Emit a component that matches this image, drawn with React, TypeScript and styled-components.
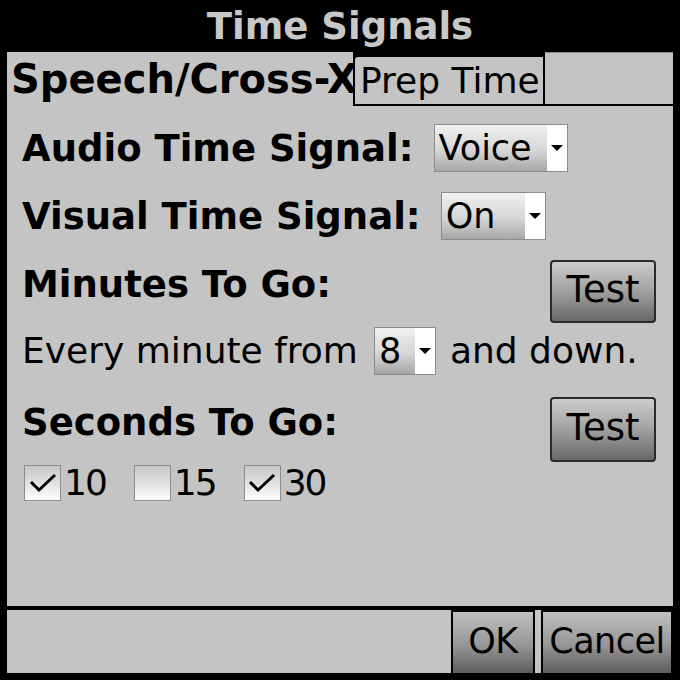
import React, { useState } from "react";
import styled, { createGlobalStyle } from "styled-components";

const GlobalStyle = createGlobalStyle`
  html, body {
    margin: 0;
    padding: 0;
    background: #000;
  }
  body {
    font-family: "DejaVu Sans", "Liberation Sans", sans-serif;
  }
`;

const Window = styled.div`
  width: 680px;
  height: 680px;
  box-sizing: border-box;
  background: #000;
  display: flex;
  flex-direction: column;
  padding: 0 7px 7px 7px;
`;

const TitleBar = styled.div`
  height: 52px;
  display: flex;
  align-items: center;
  justify-content: center;
  color: #c8c8c8;
  font-weight: bold;
  font-size: 37px;
  line-height: 1;
  padding-top: 1px;
  box-sizing: border-box;
`;

const TabRow = styled.div`
  height: 54px;
  display: flex;
`;

const Tab = styled.div<{ $active?: boolean; $w?: number }>`
  box-sizing: border-box;
  width: ${(p) => (p.$w ? `${p.$w}px` : "auto")};
  background: #c4c4c4;
  color: #000;
  display: flex;
  align-items: center;
  line-height: 1;
  font-size: ${(p) => (p.$active ? "40px" : "36px")};
  font-weight: ${(p) => (p.$active ? "bold" : "normal")};
  padding-left: ${(p) => (p.$active ? "4px" : "5px")};
  margin-top: ${(p) => (p.$active ? "0" : "3px")};
  border: ${(p) => (p.$active ? "none" : "2px solid #000")};
  border-top-left-radius: ${(p) => (p.$active ? "0" : "5px")};
  white-space: nowrap;
`;

const TabFiller = styled.div`
  flex: 1;
  background: #c4c4c4;
  border-top: 1px solid #8a8a8a;
  border-bottom: 2px solid #000;
`;

const Panel = styled.div`
  flex: 1;
  background: #c4c4c4;
  padding: 18px 17px 0 15px;
  display: flex;
  flex-direction: column;
`;

const Row = styled.div<{ $top: number; $h: number; $align?: string }>`
  display: flex;
  align-items: ${(p) => p.$align || "center"};
  height: ${(p) => p.$h}px;
  margin-top: ${(p) => p.$top}px;
`;

const Label = styled.span<{ $pad?: number; $gap?: number }>`
  font-weight: bold;
  font-size: 37px;
  line-height: 1;
  color: #000;
  padding-top: ${(p) => p.$pad || 0}px;
  margin-right: ${(p) => p.$gap || 0}px;
  white-space: nowrap;
`;

const Text = styled.span<{ $gap?: number; $lead?: number }>`
  font-size: 36px;
  line-height: 1;
  color: #000;
  margin-right: ${(p) => p.$gap || 0}px;
  margin-left: ${(p) => p.$lead || 0}px;
  white-space: nowrap;
`;

const Select = styled.div<{ $w: number }>`
  width: ${(p) => p.$w}px;
  height: 48px;
  box-sizing: border-box;
  border: 1px solid #8c8c8c;
  display: flex;
  flex-shrink: 0;
`;

const SelectValue = styled.div`
  flex: 1;
  background: linear-gradient(to bottom, #f0f0f0 0%, #d6d6d6 55%, #a6a6a6 100%);
  font-size: 35px;
  line-height: 1;
  display: flex;
  align-items: center;
  padding-left: 4px;
  color: #000;
`;

const SelectArrow = styled.div`
  width: 20px;
  background: #fff;
  display: flex;
  align-items: center;
  justify-content: center;
  &::after {
    content: "";
    border-left: 6px solid transparent;
    border-right: 6px solid transparent;
    border-top: 6px solid #000;
  }
`;

const PushButton = styled.button<{ $w: number; $h: number }>`
  width: ${(p) => p.$w}px;
  height: ${(p) => p.$h}px;
  margin-left: auto;
  box-sizing: border-box;
  border: 2px solid #2a2a2a;
  border-radius: 4px;
  background: linear-gradient(to bottom, #cdcdcd 0%, #a0a0a0 50%, #686868 100%);
  font-family: "DejaVu Sans", "Liberation Sans", sans-serif;
  font-size: 37px;
  line-height: 1;
  color: #000;
  padding: 0 0 4px 0;
  flex-shrink: 0;
`;

const CheckGroup = styled.div`
  display: flex;
  align-items: center;
  gap: 28px;
  padding-left: 2px;
`;

const CheckItem = styled.label`
  display: flex;
  align-items: center;
  gap: 3px;
  font-size: 36px;
  letter-spacing: -2px;
  line-height: 1;
  color: #000;
`;

const Box = styled.span`
  width: 37px;
  height: 36px;
  box-sizing: border-box;
  border: 1px solid #8e8e8e;
  background: linear-gradient(to bottom, #c6c6c6 0%, #e6e6e6 60%, #ffffff 100%);
  display: flex;
  align-items: center;
  justify-content: center;
`;

const Separator = styled.div`
  height: 4px;
`;

const ButtonBar = styled.div`
  height: 63px;
  background: #c4c4c4;
  display: flex;
  justify-content: flex-end;
`;

const BarButton = styled.button<{ $w: number }>`
  width: ${(p) => p.$w}px;
  height: 100%;
  box-sizing: border-box;
  border: 2px solid #000;
  border-bottom: none;
  background: linear-gradient(to bottom, #c0c0c0 0%, #959595 55%, #5e5e5e 100%);
  font-family: "DejaVu Sans", "Liberation Sans", sans-serif;
  font-size: 35px;
  letter-spacing: -0.5px;
  line-height: 1;
  color: #000;
  padding: 0 0 2px 0;
  white-space: nowrap;
  & + & {
    margin-left: 6px;
  }
`;

function Dropdown({ value, width }: { value: string; width: number }) {
  return (
    <Select $w={width}>
      <SelectValue>{value}</SelectValue>
      <SelectArrow />
    </Select>
  );
}

function Check({ label, checked }: { label: string; checked: boolean }) {
  return (
    <CheckItem>
      <Box>
        {checked && (
          <svg width="30" height="30" viewBox="0 0 30 30">
            <path d="M3 14 L11 22 L27 7" fill="none" stroke="#000" strokeWidth="3" />
          </svg>
        )}
      </Box>
      {label}
    </CheckItem>
  );
}

export default function App() {
  const [checks] = useState([
    { label: "10", checked: true },
    { label: "15", checked: false },
    { label: "30", checked: true },
  ]);

  return (
    <>
      <GlobalStyle />
      <Window>
        <TitleBar>Time Signals</TitleBar>
        <TabRow>
          <Tab $active $w={346}>Speech/Cross-X</Tab>
          <Tab $w={192}>Prep Time</Tab>
          <TabFiller />
        </TabRow>
        <Panel>
          <Row $top={0} $h={48}>
            <Label $gap={20}>Audio Time Signal:</Label>
            <Dropdown value="Voice" width={134} />
          </Row>
          <Row $top={20} $h={48}>
            <Label $gap={20}>Visual Time Signal:</Label>
            <Dropdown value="On" width={105} />
          </Row>
          <Row $top={20} $h={63} $align="flex-start">
            <Label $pad={6}>Minutes To Go:</Label>
            <PushButton $w={106} $h={63}>Test</PushButton>
          </Row>
          <Row $top={4} $h={48}>
            <Text $gap={16}>Every minute from</Text>
            <Dropdown value="8" width={62} />
            <Text $lead={14}>and down.</Text>
          </Row>
          <Row $top={22} $h={65} $align="flex-start">
            <Label $pad={7}>Seconds To Go:</Label>
            <PushButton $w={106} $h={65}>Test</PushButton>
          </Row>
          <Row $top={3} $h={36}>
            <CheckGroup>
              {checks.map((c) => (
                <Check key={c.label} label={c.label} checked={c.checked} />
              ))}
            </CheckGroup>
          </Row>
        </Panel>
        <Separator />
        <ButtonBar>
          <BarButton $w={84}>OK</BarButton>
          <BarButton $w={132}>Cancel</BarButton>
        </ButtonBar>
      </Window>
    </>
  );
}
